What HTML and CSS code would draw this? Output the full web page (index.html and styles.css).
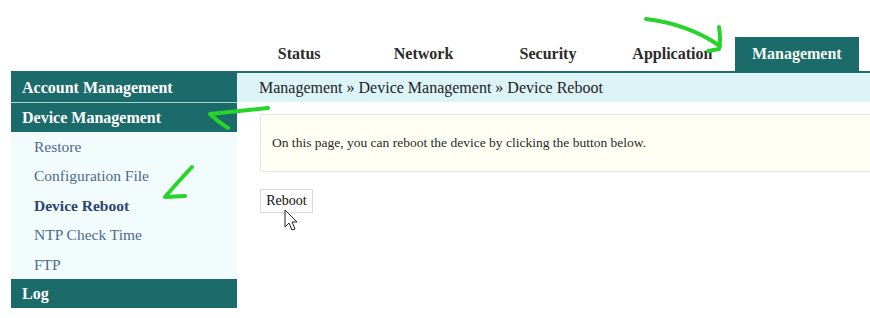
FILE: index.html
```html
<!DOCTYPE html>
<html lang="en">
<head>
<meta charset="UTF-8">
<meta name="viewport" content="width=device-width, initial-scale=1.0">
<title>Device Reboot</title>
<link rel="stylesheet" href="styles.css">
</head>
<body>
    <div class="page">
        <header class="topnav">
            <ul class="tabs">
                <li>Status</li>
                <li>Network</li>
                <li>Security</li>
                <li>Application</li>
                <li class="active">Management</li>
            </ul>
        </header>
        <div class="main">
            <aside class="sidebar">
                <div class="side-head">Account Management</div>
                <div class="side-head sep">Device Management</div>
                <ul class="submenu">
                    <li>Restore</li>
                    <li>Configuration File</li>
                    <li class="current">Device Reboot</li>
                    <li>NTP Check Time</li>
                    <li>FTP</li>
                </ul>
                <div class="side-head">Log</div>
            </aside>
            <section class="content">
                <div class="crumbs">Management &raquo; Device Management &raquo; Device Reboot</div>
                <div class="body">
                    <div class="note">On this page, you can reboot the device by clicking the button below.</div>
                    <button class="reboot">Reboot</button>
                </div>
            </section>
        </div>

        <!-- hand drawn marks from the tutorial -->
        <svg class="marks" width="870" height="318" viewBox="0 0 870 318">
            <g fill="none" stroke="#27d42a" stroke-width="4" stroke-linecap="round" stroke-linejoin="round">
                <path d="M646 19 Q688 24 720 46"/>
                <path d="M719 27 Q721 39 719 49 L708 51"/>
                <path d="M268 108 Q240 111 210 114 Q218 122 228 128"/>
                <path d="M192 167 Q176 184 165 197 L185 196"/>
            </g>
            <path class="cursor" d="M285 210 L285 227 L289 223 L292 230 L295 229 L292 222 L297 222 Z" fill="#fff" stroke="#222" stroke-width="1"/>
        </svg>
    </div>
</body>
</html>
```

FILE: styles.css
```css
body {
    font-family: "Liberation Serif", "Times New Roman", serif;
    margin: 0;
    padding: 0;
    background: #fff;
}
.page {
    position: relative;
    width: 870px;
    height: 318px;
    overflow: hidden;
    padding-left: 11px;
    box-sizing: border-box;
}
.topnav {
    padding-top: 37px;
    border-bottom: 2px solid #1b6b6a;
}
.tabs {
    list-style: none;
    margin: 0 0 0 226px;
    padding: 0;
    display: flex;
}
.tabs li {
    width: 124.4px;
    height: 34px;
    line-height: 34px;
    text-align: center;
    font-weight: bold;
    font-size: 16px;
    color: #2b2b2b;
}
.tabs li.active {
    background-color: #1b6b6a;
    color: #f4f8f2;
}
.main {
    display: flex;
}
.sidebar {
    width: 226px;
    flex-shrink: 0;
    background-color: #f2fcfd;
}
.side-head {
    background-color: #1b6b6a;
    color: #fff;
    font-weight: bold;
    font-size: 16px;
    height: 29px;
    line-height: 29px;
    padding-left: 11px;
}
.side-head.sep {
    height: 30px;
    border-top: 1px solid #a9d3d2;
    box-sizing: border-box;
    line-height: 29px;
}
.submenu {
    list-style: none;
    margin: 0;
    padding: 0;
}
.submenu li {
    height: 29.4px;
    line-height: 30px;
    padding-left: 23px;
    font-size: 15.5px;
    color: #4d6a8c;
}
.submenu li.current {
    font-weight: bold;
    color: #2b4470;
}
.content {
    flex: 1;
    min-width: 0;
}
.crumbs {
    background-color: #dcf4f7;
    height: 29px;
    line-height: 29px;
    padding-left: 22px;
    font-size: 16px;
    color: #222;
}
.body {
    padding: 12px 0 0 23px;
}
.note {
    background-color: #fffff4;
    border: 1px solid #e6e6e2;
    border-right: none;
    height: 56px;
    line-height: 56px;
    padding-left: 11px;
    font-size: 13.5px;
    color: #2a2a2a;
}
.reboot {
    margin-top: 17px;
    width: 53px;
    height: 24px;
    padding: 0;
    font-family: "Liberation Serif", "Times New Roman", serif;
    font-size: 14px;
    color: #111;
    background-color: #fdfdfd;
    border: 1px solid #dadada;
}
.marks {
    position: absolute;
    left: 0;
    top: 0;
    pointer-events: none;
}
```
